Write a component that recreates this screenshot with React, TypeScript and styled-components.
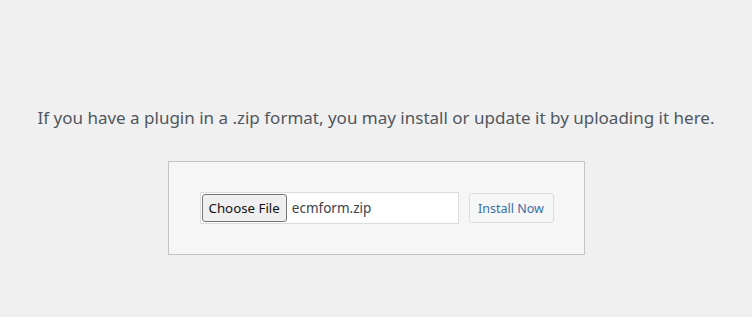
import { createGlobalStyle, styled } from "styled-components";

const Global = createGlobalStyle`
  html, body {
    margin: 0;
    background: #f0f0f1;
  }
  body {
    font-family: "Noto Sans", "Open Sans", sans-serif;
  }
`;

const Page = styled.div`
  width: 752px;
  height: 317px;
  display: flex;
  flex-direction: column;
  align-items: center;
  padding-top: 104px;
  box-sizing: border-box;
`;

const Help = styled.p`
  margin: 0;
  color: #50575e;
  font-size: 17px;
  line-height: 28px;
  text-align: center;
  white-space: nowrap;
`;

const Form = styled.div`
  margin-top: 29px;
  width: 417px;
  height: 94px;
  box-sizing: border-box;
  background: #f6f6f6;
  border: 1px solid #c3c4c7;
  display: flex;
  align-items: center;
  padding: 0 30px 0 31px;
  gap: 10px;
`;

const FileField = styled.div`
  width: 259px;
  height: 32px;
  box-sizing: border-box;
  background: #fff;
  border: 1px solid #dcdcde;
  display: flex;
  align-items: center;
  padding: 1px;
  gap: 5px;
`;

const ChooseButton = styled.button`
  height: 28px;
  padding: 0 6px;
  box-sizing: border-box;
  background: #efefef;
  border: 1px solid #767676;
  border-radius: 3px;
  color: #111;
  font-family: "Noto Sans", "Open Sans", sans-serif;
  font-size: 13.3px;
`;

const FileName = styled.span`
  color: #3c434a;
  font-size: 13.5px;
`;

const InstallButton = styled.button`
  width: 85px;
  height: 30px;
  box-sizing: border-box;
  background: #f6f7f7;
  border: 1px solid #dcdcde;
  border-radius: 3px;
  color: #3a6ea5;
  font-family: "Noto Sans", "Open Sans", sans-serif;
  font-size: 12.5px;
  padding: 0;
`;

export default function App() {
  return (
    <>
      <Global />
      <Page>
        <Help>
          If you have a plugin in a .zip format, you may install or update it by uploading it here.
        </Help>
        <Form>
          <FileField>
            <ChooseButton>Choose File</ChooseButton>
            <FileName>ecmform.zip</FileName>
          </FileField>
          <InstallButton disabled>Install Now</InstallButton>
        </Form>
      </Page>
    </>
  );
}
